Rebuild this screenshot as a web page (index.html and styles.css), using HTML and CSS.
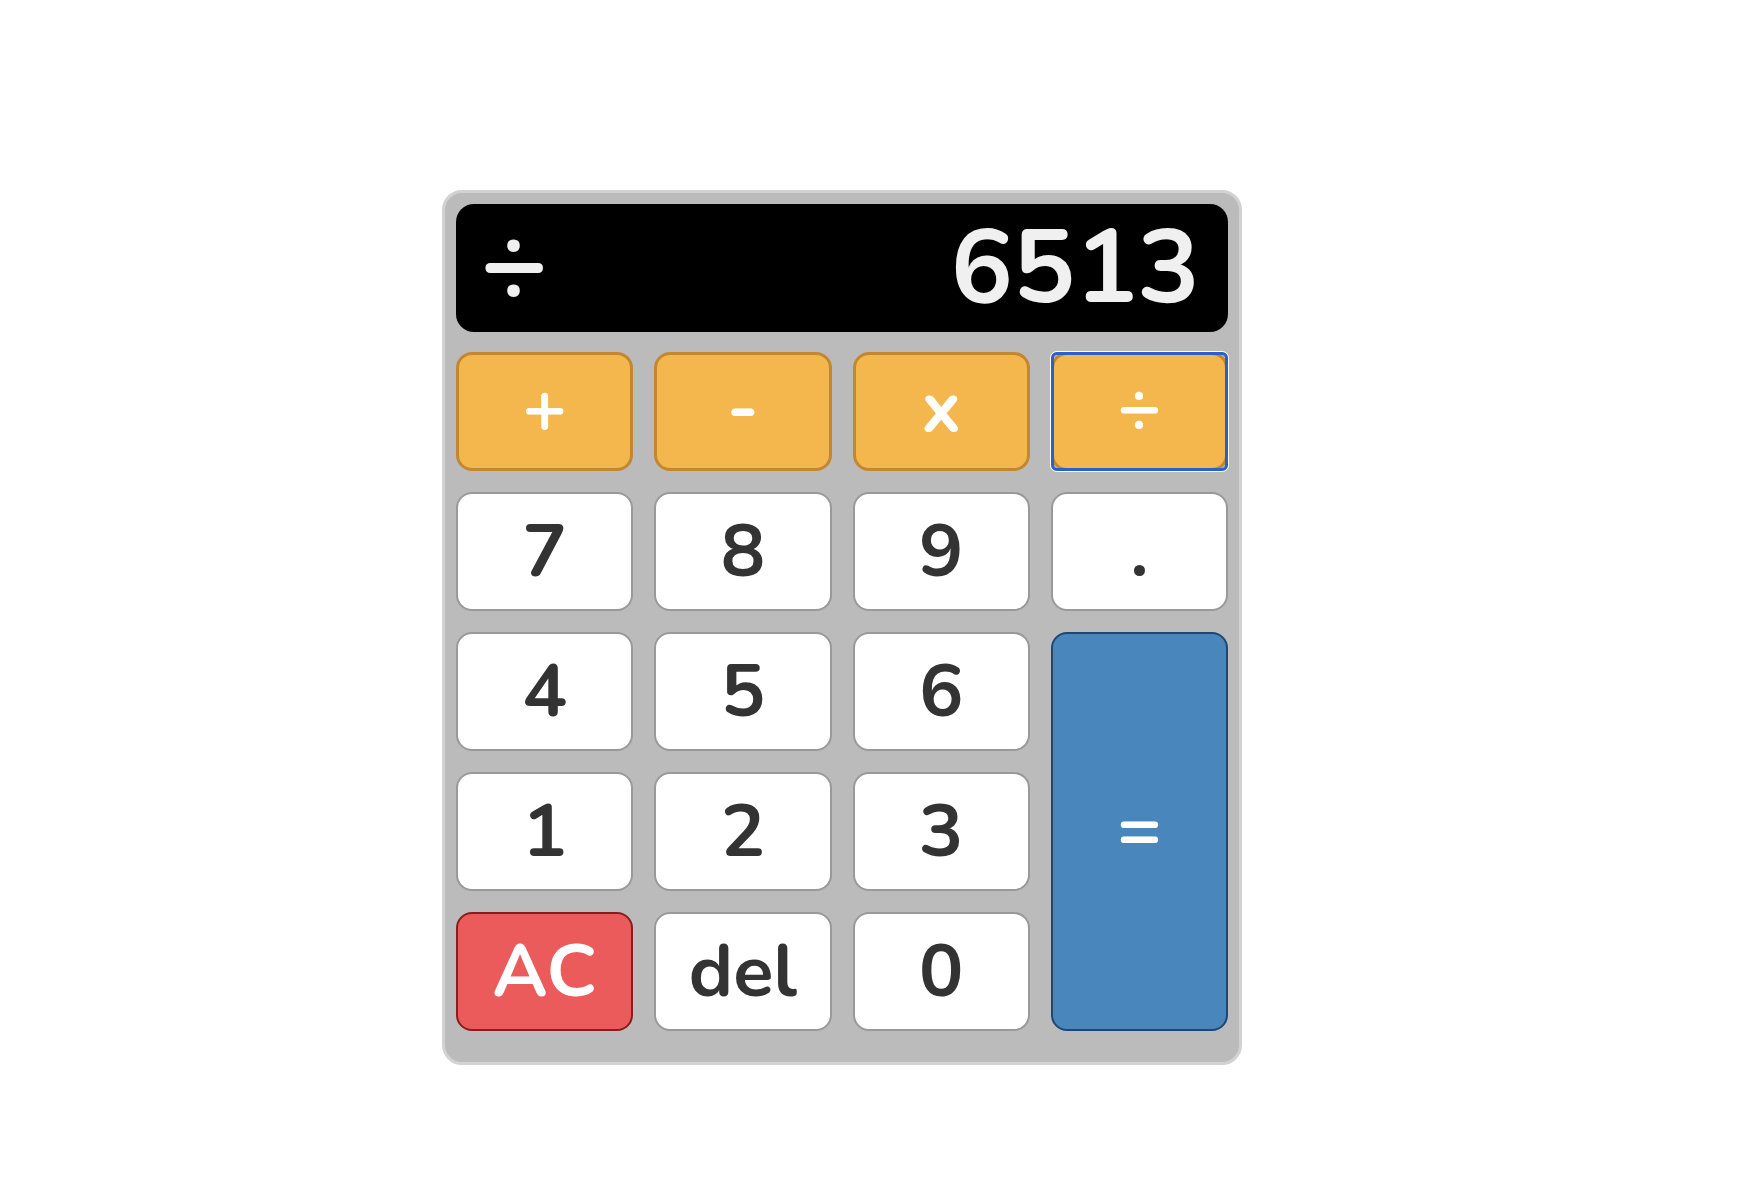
FILE: index.html
```html
<!DOCTYPE html>
<html lang="en">
<head>
<meta charset="utf-8">
<title>Calculator</title>
<link rel="stylesheet" href="styles.css">
</head>
<body>
  <main class="calculator">
    <div class="display">
      <span class="display-op">÷</span>
      <span class="display-value">6513</span>
    </div>
    <div class="keys">
      <button class="key key-op">+</button>
      <button class="key key-op">-</button>
      <button class="key key-op">x</button>
      <button class="key key-op key-focused">÷</button>

      <button class="key">7</button>
      <button class="key">8</button>
      <button class="key">9</button>
      <button class="key">.</button>

      <button class="key">4</button>
      <button class="key">5</button>
      <button class="key">6</button>
      <button class="key key-equals">=</button>

      <button class="key">1</button>
      <button class="key">2</button>
      <button class="key">3</button>

      <button class="key key-clear">AC</button>
      <button class="key">del</button>
      <button class="key">0</button>
    </div>
  </main>
</body>
</html>
```

FILE: styles.css
```css
html, body {
  margin: 0;
  padding: 0;
  background: #ffffff;
}

body {
  font-family: "Nunito", "Noto Sans", "DejaVu Sans", sans-serif;
  padding: 190px 0 0 442px;
}

.calculator {
  box-sizing: border-box;
  width: 800px;
  height: 875px;
  background: #bbbbbb;
  border: 3px solid #d2d2d2;
  border-radius: 20px;
  padding: 11px 11px 31px 11px;
  display: flex;
  flex-direction: column;
  gap: 20px;
}

.display {
  box-sizing: border-box;
  height: 128px;
  background: #000000;
  border-radius: 18px;
  color: #f0f0f0;
  display: flex;
  align-items: center;
  justify-content: space-between;
  padding: 0 28px 0 24px;
  font-weight: 700;
  font-size: 104px;
  line-height: 1;
}

.display-op {
  font-size: 114px;
  margin-top: -8px;
}

.keys {
  display: grid;
  grid-template-columns: repeat(4, 1fr);
  grid-template-rows: repeat(5, 119px);
  gap: 21px;
}

.key {
  box-sizing: border-box;
  margin: 0;
  padding: 0;
  font-family: inherit;
  font-weight: 700;
  font-size: 74px;
  line-height: 1;
  color: #333333;
  background: #ffffff;
  border: 2px solid #999999;
  border-radius: 16px;
  display: flex;
  align-items: center;
  justify-content: center;
}

.key-op {
  background: #f4b74d;
  border: 3px solid #c3872f;
  color: #ffffff;
  font-size: 74px;
  padding-bottom: 8px;
  position: relative;
}

.key-focused::after {
  content: "";
  position: absolute;
  inset: -3px;
  border: 3px solid #2862c8;
  border-radius: 6px;
  box-shadow: 0 0 0 1px #ffffff;
  pointer-events: none;
}

.key-equals {
  grid-column: 4;
  grid-row: 3 / 6;
  background: #4886bc;
  border: 2px solid #1d4876;
  color: #ffffff;
  padding-bottom: 4px;
}

.key-clear {
  background: #eb5b5b;
  border: 2px solid #8c1c1c;
  color: #ffffff;
}
```
